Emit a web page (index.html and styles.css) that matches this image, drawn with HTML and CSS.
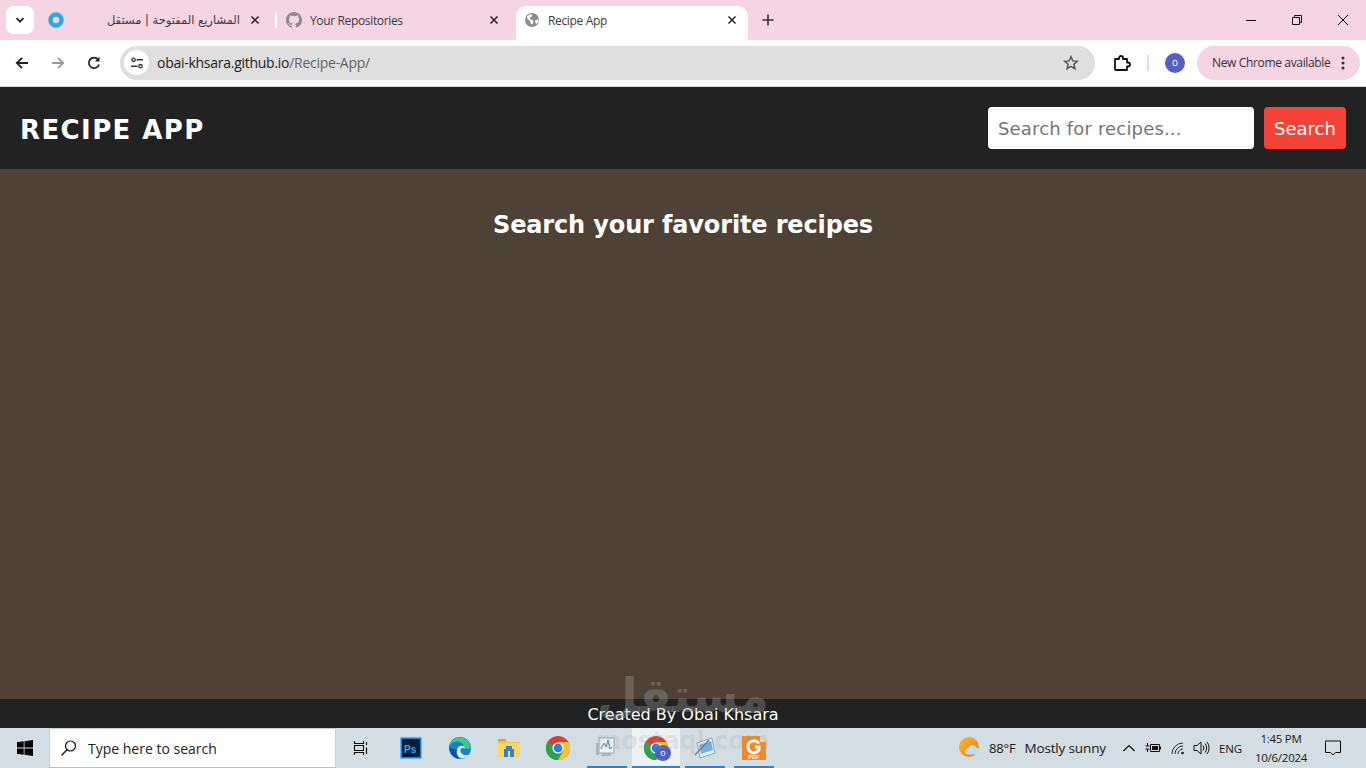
FILE: index.html
```html
<!DOCTYPE html>
<html lang="en">
<head>
<meta charset="utf-8">
<title>Recipe App</title>
<link rel="stylesheet" href="styles.css">
</head>
<body>
<div class="screen">
  <div class="tabstrip">
    <button class="tab-search"><svg width="10" height="10" viewBox="0 0 10 10"><path d="M1.5 3.2 5 6.7l3.500-3.500" fill="none" stroke="#222" stroke-width="1.800"/></svg></button>
    <div class="tab tab-one">
      <svg class="favicon" width="16" height="16" viewBox="0 0 16 16"><circle cx="8" cy="8" r="5.500" fill="none" stroke="#2aa9e6" stroke-width="4.500"/></svg>
      <span class="tab-title tab-title-ar" dir="rtl">المشاريع المفتوحة | مستقل</span>
      <svg class="tab-close" width="10" height="10" viewBox="0 0 10 10"><path d="M1.500 1.500l7 7M8.500 1.500l-7 7" stroke="#222" stroke-width="1.500"/></svg>
    </div>
    <i class="tab-sep"></i>
    <div class="tab tab-two">
      <svg class="favicon" width="16" height="16" viewBox="0 0 16 16"><path fill="#8a8a8a" d="M8 0C3.580 0 0 3.580 0 8c0 3.540 2.290 6.530 5.470 7.590.4.070.55-.17.55-.38v-1.490c-2.010.37-2.530-.49-2.690-.94-.09-.23-.48-.94-.82-1.130-.28-.15-.68-.52-.01-.53.63-.01 1.080.58 1.230.82.720 1.210 1.870.87 2.330.66.070-.52.280-.87.510-1.070-1.780-.2-3.640-.89-3.640-3.950 0-.87.310-1.590.820-2.150-.08-.2-.36-1.020.08-2.120 0 0 .67-.21 2.200.82a7.600 7.600 0 0 1 4 0c1.530-1.040 2.200-.82 2.200-.82.440 1.100.16 1.920.08 2.120.51.560.82 1.270.82 2.150 0 3.070-1.870 3.750-3.650 3.950.290.250.540.730.540 1.480v2.190c0 .21.150.460.550.380A8 8 0 0 0 16 8c0-4.420-3.580-8-8-8z"/></svg>
      <span class="tab-title">Your Repositories</span>
      <svg class="tab-close" width="10" height="10" viewBox="0 0 10 10"><path d="M1.500 1.500l7 7M8.500 1.500l-7 7" stroke="#222" stroke-width="1.500"/></svg>
    </div>
    <div class="tab tab-active">
      <svg class="favicon" width="16" height="16" viewBox="0 0 16 16"><circle cx="8" cy="8" r="7" fill="#8c8c8c"/><path fill="#fff" d="M3 4.500l3-2.300 2.500.6-.8 2-2 .8.800 2 2.200.3.900 2-1.500 2.500-1.200-.3-.700-3-2.500-1.800zM11 8.500l3-1.200.4 2-1.600 2.700-1.300-1z"/></svg>
      <span class="tab-title">Recipe App</span>
      <svg class="tab-close" width="10" height="10" viewBox="0 0 10 10"><path d="M1.500 1.500l7 7M8.500 1.500l-7 7" stroke="#222" stroke-width="1.500"/></svg>
    </div>
    <svg class="new-tab" width="12" height="12" viewBox="0 0 12 12"><path d="M6 .5v11M.5 6h11" stroke="#333" stroke-width="1.600"/></svg>
    <div class="window-controls">
      <svg width="12" height="12" viewBox="0 0 12 12"><path d="M1 6.500h10" stroke="#111" stroke-width="1"/></svg>
      <svg width="12" height="12" viewBox="0 0 12 12"><path d="M1.500 3.500h7v7h-7zM3.500 3.500v-2h7v7h-2" fill="none" stroke="#111" stroke-width="1"/></svg>
      <svg width="12" height="12" viewBox="0 0 12 12"><path d="M1 1l10 10M11 1 1 11" stroke="#111" stroke-width="1"/></svg>
    </div>
  </div>

  <div class="toolbar">
    <svg class="nav-icon" width="16" height="16" viewBox="0 0 16 16"><path d="M14 8H3M8 2.800 2.800 8 8 13.200" fill="none" stroke="#222" stroke-width="1.800"/></svg>
    <svg class="nav-icon" width="16" height="16" viewBox="0 0 16 16"><path d="M2 8h11M8 2.800 13.200 8 8 13.200" fill="none" stroke="#9a9a9a" stroke-width="1.800"/></svg>
    <svg class="nav-icon" width="16" height="16" viewBox="0 0 16 16"><path d="M13 9.500A5.200 5.200 0 1 1 12 4.500" fill="none" stroke="#222" stroke-width="1.800"/><path d="M13.500 1.800v4.700H8.800z" fill="#222"/></svg>
    <div class="omnibox">
      <span class="site-chip"><svg width="16" height="16" viewBox="0 0 16 16"><circle cx="4.500" cy="4.800" r="1.700" fill="none" stroke="#333" stroke-width="1.300"/><path d="M7.500 4.800h6.500M2 11.200h6.500" stroke="#333" stroke-width="1.500"/><circle cx="11.500" cy="11.200" r="1.700" fill="none" stroke="#333" stroke-width="1.300"/></svg></span>
      <span class="url"><span class="url-host">obai-khsara.github.io</span><span class="url-path">/Recipe-App/</span></span>
      <svg class="star" width="16" height="16" viewBox="0 0 16 16"><path d="M8 1.800l1.800 4.100 4.500.4-3.400 3 1 4.400L8 11.400l-3.900 2.300 1-4.400-3.400-3 4.500-.4z" fill="none" stroke="#555" stroke-width="1.500"/></svg>
    </div>
    <svg class="extensions" width="18" height="18" viewBox="0 0 18 18"><path d="M2 5h4V4a2 2 0 0 1 4 0v1h4v3.500h1a2 2 0 0 1 0 4h-1V16H2.500a.5.500 0 0 1-.5-.5z" fill="none" stroke="#111" stroke-width="1.800" stroke-linejoin="round"/></svg>
    <i class="toolbar-sep"></i>
    <span class="avatar">o</span>
    <div class="update-pill">
      <span class="update-label">New Chrome available</span>
      <svg width="4" height="14" viewBox="0 0 4 14"><circle cx="2" cy="2" r="1.500" fill="#333"/><circle cx="2" cy="7" r="1.500" fill="#333"/><circle cx="2" cy="12" r="1.500" fill="#333"/></svg>
    </div>
  </div>

  <header class="app-header">
    <h1 class="brand">RECIPE APP</h1>
    <form class="search-form">
      <input class="search-input" type="text" placeholder="Search for recipes...">
      <button class="search-button" type="button">Search</button>
    </form>
  </header>

  <main class="app-main">
    <h2 class="headline">Search your favorite recipes</h2>
  </main>

  <footer class="app-footer">Created By Obai Khsara</footer>

  <div class="taskbar">
    <div class="start"><svg width="16" height="16" viewBox="0 0 16 16"><path fill="#000" d="M0 2.300 6.700 1.300v6.300H0zM7.500 1.200 16 0v7.600H7.500zM0 8.400h6.700v6.300L0 13.700zM7.500 8.400H16V16l-8.500-1.200z"/></svg></div>
    <div class="task-search">
      <svg width="18" height="18" viewBox="0 0 18 18"><circle cx="10.500" cy="7" r="5" fill="none" stroke="#111" stroke-width="1.200"/><path d="M7 10.700 1.500 16.500" stroke="#111" stroke-width="1.300"/></svg>
      <span>Type here to search</span>
    </div>
    <div class="task-apps">
      <div class="app-slot app-taskview"><svg width="16" height="16" viewBox="0 0 16 16"><path d="M2.500 1v2.500h9V1M2.500 15v-2.500h9V15M2.500 5.500h9v5h-9z" fill="none" stroke="#111" stroke-width="1.100"/><path d="M14.500 2v3M14.500 7.500v6.500" stroke="#111" stroke-width="1.200"/></svg></div>
      <div class="app-slot"><svg width="22" height="22" viewBox="0 0 22 22"><rect x="1" y="1" width="20" height="20" fill="#001e36" stroke="#31a8ff" stroke-width="1.500"/><text x="4" y="16" class="ps-glyph">Ps</text></svg></div>
      <div class="app-slot"><svg width="24" height="24" viewBox="0 0 26 26"><circle cx="13" cy="13" r="12" fill="#1b7fd0"/><path d="M25 13c0-6-5-11.500-12-11.500C7 1.500 2 6 1.500 11c2-3.500 5.500-5 8.500-5 4 0 7 2.500 7 5.500 0 1-.5 1.800-1 2.300h9z" fill="#3fc78a"/><path d="M9.500 17c0-3.500 2-6.500 5.500-6.500 2 0 3 1 3 2.500-2.500-1-5 .5-4.500 3.500.5 3.500 5.500 5.500 10 3.500-2.500 3-6 4-8 4-3.500 0-6-3.500-6-7z" fill="#d5eefa"/><path d="M1.500 12.500c.5 6 5 12 11 12.300C9 22 8.500 17.500 9.500 14c-2 1-5.500 0-8-1.500z" fill="#0d4f9e"/></svg></div>
      <div class="app-slot"><svg width="22" height="18" viewBox="0 0 22 18"><path d="M0 1h8l2 2h12v15H0z" fill="#f3c13a"/><path d="M0 0h8v2H0z" fill="#e0a324"/><path d="M0 4h22v14H0z" fill="#fad765"/><path d="M6 10h10v8H6zM8 7h6v3H8z" fill="#2b86d0"/><path d="M10 12h2v6h-2z" fill="#fad765"/></svg></div>
      <div class="app-slot"><svg width="24" height="24" viewBox="0 0 24 24"><use href="#chrome-logo"/></svg></div>
      <div class="app-slot app-running"><svg width="26" height="24" viewBox="0 0 26 24"><rect x="5" y="2" width="15" height="15" fill="#eef3f5" stroke="#9aa5a8"/><path d="M7 13l3-6 2 4 2-7 2 9 2-2" fill="none" stroke="#4c83b8" stroke-width="1"/><path d="M2 7h3v12H2zM9 17h8v3H7z" fill="#aeb5b8"/></svg></div>
      <div class="app-slot app-running app-active"><svg class="chrome-big" width="24" height="24" viewBox="0 0 24 24"><use href="#chrome-logo"/></svg><span class="chrome-badge">o</span></div>
      <div class="app-slot app-running"><svg width="24" height="24" viewBox="0 0 24 24"><path d="M4 7 19 2l3 15-15 5z" fill="#e8eef2" stroke="#93a3ad"/><path d="M6 9l12-4 2 9-12 4z" fill="#6fb1de"/><path d="M2 19 16 4" stroke="#748089" stroke-width="1.500"/></svg></div>
      <div class="app-slot app-running"><svg width="24" height="24" viewBox="0 0 24 24"><path d="M0 0h18l6 6v18H0z" fill="#f08a24"/><path d="M18 0v6h6z" fill="#fbd2a6"/><path d="M17 7.500A6 6 0 1 0 17 14v-3h-4" fill="none" stroke="#fff" stroke-width="3"/><text x="6" y="22.500" class="pdf-glyph">PDF</text></svg></div>
    </div>
    <div class="tray">
      <svg class="weather" width="22" height="22" viewBox="0 0 22 22"><defs><linearGradient id="sun" x1="0" y1="0" x2="1" y2="1"><stop offset="0" stop-color="#f7b92f"/><stop offset="1" stop-color="#ee7f1c"/></linearGradient></defs><circle cx="10" cy="10" r="10" fill="url(#sun)"/><path d="M9 17.500a3 3 0 0 1 .5-6 4.200 4.200 0 0 1 8-.5 3.300 3.300 0 0 1 1.500 6.500z" fill="#bcdff2"/></svg>
      <span class="temp">88°F</span>
      <span class="condition">Mostly sunny</span>
      <svg class="tray-chevron" width="14" height="10" viewBox="0 0 14 10"><path d="M1.500 8 7 2.500 12.500 8" fill="none" stroke="#111" stroke-width="1.200"/></svg>
      <svg class="tray-battery" width="16" height="16" viewBox="0 0 16 16"><path d="M5.500 4.500h9v7h-9zM15.500 6.500v3M.5 6h4M.5 9h4M2.500 3v3M2.500 9v3" fill="none" stroke="#111" stroke-width="1"/><path d="M7 6h6v4H7z" fill="#111"/></svg>
      <svg class="tray-wifi" width="16" height="16" viewBox="0 0 16 16"><path d="M2 14A11 11 0 0 1 13 3M5 14a8 8 0 0 1 8-8M8 14a5 5 0 0 1 5-5" fill="none" stroke="#333" stroke-width="1"/><circle cx="12.500" cy="13" r="1.300" fill="#111"/></svg>
      <svg class="tray-volume" width="17" height="16" viewBox="0 0 17 16"><path d="M1 5.500h3L8 2v12l-4-3.500H1z" fill="none" stroke="#111" stroke-width="1"/><path d="M10 5.500a4 4 0 0 1 0 5M12 3.500a7 7 0 0 1 0 9M14 2a9.500 9.500 0 0 1 0 12" fill="none" stroke="#111" stroke-width="1"/></svg>
      <span class="lang">ENG</span>
      <div class="clock"><span>1:45 PM</span><span>10/6/2024</span></div>
      <svg class="notify" width="18" height="16" viewBox="0 0 18 16"><path d="M1.500 1h15v11.500h-5L9 15l-2.500-2.500h-5z" fill="none" stroke="#111" stroke-width="1"/></svg>
    </div>
  </div>

  <div class="watermark" aria-hidden="true">
    <span class="watermark-ar" dir="rtl">مستقل</span>
    <span class="watermark-en">mostaql.com</span>
  </div>
</div>

<svg class="defs" width="0" height="0">
  <defs>
    <g id="chrome-logo">
      <circle cx="12" cy="12" r="12" fill="#dc3e31"/>
      <path d="M12 12 1.600 6A12 12 0 0 0 12 24l5.200-9z" fill="#2ba24c"/>
      <path d="M12 6h10.400A12 12 0 0 1 12 24l5.200-9z" fill="#f7c32e"/>
      <circle cx="12" cy="12" r="5.600" fill="#fff"/>
      <circle cx="12" cy="12" r="4.400" fill="#2a7de1"/>
    </g>
  </defs>
</svg>
</body>
</html>
```

FILE: styles.css
```css
* { box-sizing: border-box; }
html, body { margin: 0; padding: 0; }
body { width: 1366px; height: 768px; overflow: hidden; }

.screen {
  position: relative;
  width: 1366px;
  height: 768px;
  display: flex;
  flex-direction: column;
  font-family: "Open Sans", "Noto Sans", sans-serif;
}
.defs { position: absolute; }

/* Browser tab strip */
.tabstrip {
  height: 40px;
  flex: none;
  display: flex;
  align-items: flex-end;
  background: #f5d4e4;
  padding-left: 6px;
}
.tab-search {
  width: 28px;
  height: 28px;
  margin-bottom: 6px;
  padding: 0;
  border: 0;
  border-radius: 8px;
  background: #fff;
  display: flex;
  align-items: center;
  justify-content: center;
}
.tab {
  height: 34px;
  display: flex;
  align-items: center;
  font-size: 12px;
  color: #333;
}
.tab-one { width: 230px; margin-left: 6px; padding: 0 10px 6px 8px; }
.tab-two { width: 231px; padding: 0 9px 6px 9px; }
.tab-active {
  width: 232px;
  margin-left: 8px;
  padding: 0 11px 6px 8px;
  background: #fff;
  border-radius: 10px 10px 0 0;
}
.favicon { flex: none; }
.tab-title { flex: 1; margin-left: 8px; white-space: nowrap; overflow: hidden; letter-spacing: -.35px; color: #3c3c3c; }
.tab-title-ar {
  font-family: "DejaVu Sans", sans-serif;
  font-size: 11.500px;
  text-align: right;
  direction: rtl;
  padding-right: 10px;
  letter-spacing: -.3px;
}
.tab-close { flex: none; }
.tab-sep { width: 2px; height: 16px; margin: 0 0 12px 5px; background: #fff; flex: none; }
.new-tab { margin: 0 0 14px 14px; }
.window-controls {
  margin-left: auto;
  height: 40px;
  width: 138px;
  display: flex;
  align-items: center;
  justify-content: space-between;
  padding: 0 17px;
}

/* Browser toolbar */
.toolbar {
  height: 47px;
  flex: none;
  display: flex;
  align-items: center;
  background: #fff;
  border-bottom: 1px solid #d8d8d8;
  border-radius: 8px 8px 0 0;
  padding: 0 6px 1px 14px;
}
.nav-icon { flex: none; margin-right: 20px; }
.nav-icon:nth-child(3) { margin-right: 18px; }
.omnibox {
  width: 975px;
  height: 34px;
  flex: none;
  display: flex;
  align-items: center;
  background: #dfdfdf;
  border-radius: 17px;
  padding: 0 16px 0 4px;
}
.site-chip {
  width: 25px;
  height: 25px;
  border-radius: 50%;
  background: #fff;
  display: flex;
  align-items: center;
  justify-content: center;
  flex: none;
}
.url { flex: 1; margin-left: 8px; font-size: 14px; letter-spacing: -.27px; }
.url-host { color: #222; }
.url-path { color: #5f6368; }
.extensions { margin-left: 18px; flex: none; }
.toolbar-sep { width: 2px; height: 16px; margin-left: 16px; background: #f5d4e4; }
.avatar {
  width: 20px;
  height: 20px;
  margin-left: 16px;
  border-radius: 50%;
  background: #5360bd;
  color: #fff;
  font-size: 10px;
  line-height: 18px;
  text-align: center;
  flex: none;
}
.update-pill {
  width: 163px;
  height: 34px;
  margin-left: 12px;
  flex: none;
  border-radius: 17px;
  background: #f5d4e4;
  display: flex;
  align-items: center;
  justify-content: space-between;
  padding: 0 15px;
  font-size: 12px;
  color: #333;
}
.update-label { letter-spacing: -.35px; }

/* App */
.app-header {
  height: 82px;
  flex: none;
  display: flex;
  align-items: center;
  justify-content: space-between;
  background: #222;
  padding: 0 20px;
  font-family: "DejaVu Sans", Verdana, sans-serif;
}
.brand {
  margin: 4px 0 0;
  font-size: 26px;
  font-weight: 700;
  color: #fff;
  letter-spacing: 1.400px;
}
.search-form { display: flex; gap: 10px; }
.search-input {
  width: 266px;
  height: 42px;
  border: 0;
  border-radius: 4px;
  background: #fff;
  padding: 0 10px;
  font: 18px "DejaVu Sans", Verdana, sans-serif;
  letter-spacing: .17px;
  outline: none;
}
.search-input::placeholder { color: #757575; opacity: 1; }
.search-button {
  width: 82px;
  height: 42px;
  border: 0;
  border-radius: 4px;
  background: #f44336;
  color: #fff;
  font: 18px "DejaVu Sans", Verdana, sans-serif;
  padding: 0;
}
.app-main {
  flex: 1;
  background: #4e4237;
  padding-top: 40px;
  font-family: "DejaVu Sans", Verdana, sans-serif;
}
.headline {
  margin: 0;
  text-align: center;
  font-size: 24px;
  line-height: 32px;
  font-weight: 700;
  letter-spacing: -.14px;
  color: #fff;
}
.app-footer {
  height: 29px;
  flex: none;
  background: #222;
  color: #fff;
  text-align: center;
  font: 16px/31px "DejaVu Sans", Verdana, sans-serif;
}

/* Taskbar */
.taskbar {
  height: 40px;
  flex: none;
  display: flex;
  align-items: center;
  background: #d3dde4;
  font-size: 14px;
  color: #1a1a1a;
}
.start { width: 49px; height: 40px; display: flex; align-items: center; justify-content: center; flex: none; }
.task-search {
  width: 287px;
  height: 40px;
  flex: none;
  background: #fff;
  border: 1px solid #c9ced2;
  border-bottom-color: #b9bfc4;
  display: flex;
  align-items: center;
  padding-left: 10px;
  gap: 10px;
  color: #222;
}
.task-apps { display: flex; margin-left: 1px; height: 40px; }
.app-slot {
  width: 49px;
  height: 40px;
  flex: none;
  display: flex;
  align-items: center;
  justify-content: center;
  position: relative;
}
.app-taskview svg { margin-right: 3px; }
.app-running::after {
  content: "";
  position: absolute;
  left: 5px;
  right: 4px;
  bottom: 0;
  height: 2px;
  background: #2a85d0;
}
.app-active { margin-left: 1px; width: 48px; background: #edf1f4; }
.app-active::after { left: 0; right: 0; }
.ps-glyph { font: 700 10px "Liberation Sans", sans-serif; fill: #31a8ff; }
.pdf-glyph { font: 700 6px "Liberation Sans", sans-serif; fill: #fff; }
.chrome-badge {
  position: absolute;
  left: 23px;
  top: 17px;
  width: 16px;
  height: 16px;
  border-radius: 50%;
  background: #5360bd;
  color: #fff;
  font-size: 9px;
  line-height: 15px;
  text-align: center;
}
.tray {
  margin-left: auto;
  height: 40px;
  display: flex;
  align-items: center;
  flex: none;
}
.weather { margin-right: 8px; flex: none; }
.temp { margin-right: 9px; font-size: 13px; letter-spacing: -.2px; }
.condition { margin-right: 16px; font-size: 13.500px; letter-spacing: -.15px; }
.tray-chevron { margin-right: 9px; flex: none; }
.tray-battery { margin-right: 9px; flex: none; }
.tray-wifi { margin-right: 7px; flex: none; }
.tray-volume { margin-right: 9px; flex: none; }
.lang { font-size: 11.500px; letter-spacing: -.1px; }
.clock {
  width: 72px;
  margin-left: 3px;
  display: flex;
  flex-direction: column;
  align-items: center;
  font-size: 11.500px;
  line-height: 19px;
  letter-spacing: -.25px;
}
.notify { margin: 0 24px 0 7px; flex: none; }

/* Watermark over the footer and taskbar */
.watermark {
  position: absolute;
  left: 583px;
  top: 660px;
  width: 200px;
  height: 98px;
  display: flex;
  flex-direction: column;
  align-items: center;
  pointer-events: none;
}
.watermark-ar {
  font: 700 47px/72px "DejaVu Sans", sans-serif;
  color: rgba(160, 160, 160, .36);
}
.watermark-en {
  margin-top: -5px;
  font: 700 24px/28px "DejaVu Sans", sans-serif;
  color: rgba(150, 150, 150, .16);
}
```
